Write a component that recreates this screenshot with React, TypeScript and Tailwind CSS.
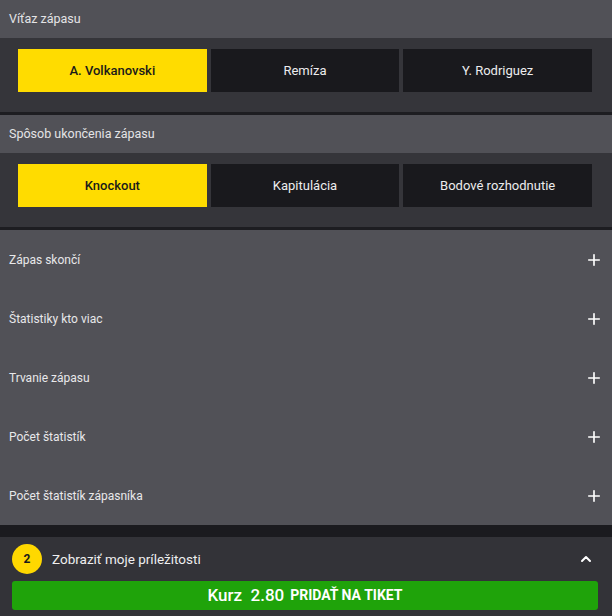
import { ChevronUp, Plus } from "lucide-react";

const groups = [
  {
    title: "Víťaz zápasu",
    options: ["A. Volkanovski", "Remíza", "Y. Rodriguez"],
  },
  {
    title: "Spôsob ukončenia zápasu",
    options: ["Knockout", "Kapitulácia", "Bodové rozhodnutie"],
  },
];

const rows = [
  "Zápas skončí",
  "Štatistiky kto viac",
  "Trvanie zápasu",
  "Počet štatistík",
  "Počet štatistík zápasníka",
];

const App = () => {
  return (
    <div className="flex h-[616px] w-[612px] flex-col overflow-hidden bg-[#515157] font-['Roboto',sans-serif] text-white">
      {groups.map((group) => (
        <div key={group.title} className="flex flex-col border-b-[3px] border-[#1d1d21]">
          <div className="flex h-[38px] items-center px-[9px] text-[12.5px] text-[#e4e4e6]">
            {group.title}
          </div>
          <div className="grid grid-cols-3 gap-1 bg-[#35353a] pt-[11px] pr-[20px] pb-[20px] pl-[18px]">
            {group.options.map((opt, i) => (
              <button
                key={opt}
                className={
                  i === 0
                    ? "h-[43px] bg-[#ffdc00] text-[13px] font-medium text-[#1a1a1a]"
                    : "h-[43px] bg-[#19191d] text-[13px] text-[#ececee]"
                }
              >
                {opt}
              </button>
            ))}
          </div>
        </div>
      ))}

      <div className="flex flex-col">
        {rows.map((row) => (
          <div key={row} className="flex h-[59px] items-center justify-between pr-[9px] pl-[9px]">
            <span className="text-[12px] text-[#e8e8ea]">{row}</span>
            <Plus size={18} strokeWidth={2.2} className="text-white" />
          </div>
        ))}
      </div>

      <div className="h-[12px] bg-[#1b1b1f]" />

      <div className="flex flex-1 flex-col bg-[#333338] px-3">
        <div className="flex h-[44px] items-center gap-[10px]">
          <div className="flex h-[30px] w-[30px] items-center justify-center rounded-full bg-[#ffd800] text-[12px] font-bold text-[#1a1a1a]">
            2
          </div>
          <span className="flex-1 text-[13.5px] text-[#efefef]">Zobraziť moje príležitosti</span>
          <ChevronUp size={16} strokeWidth={3} className="mr-[6px] text-white" />
        </div>
        <button className="flex h-[29px] w-[586px] items-center justify-center gap-[6px] rounded-[3px] bg-[#1fa30a] text-white">
          <span className="text-[17px] font-medium">Kurz&nbsp; 2.80</span>
          <span className="text-[14px] font-bold">PRIDAŤ NA TIKET</span>
        </button>
      </div>
    </div>
  );
};

export default App;
